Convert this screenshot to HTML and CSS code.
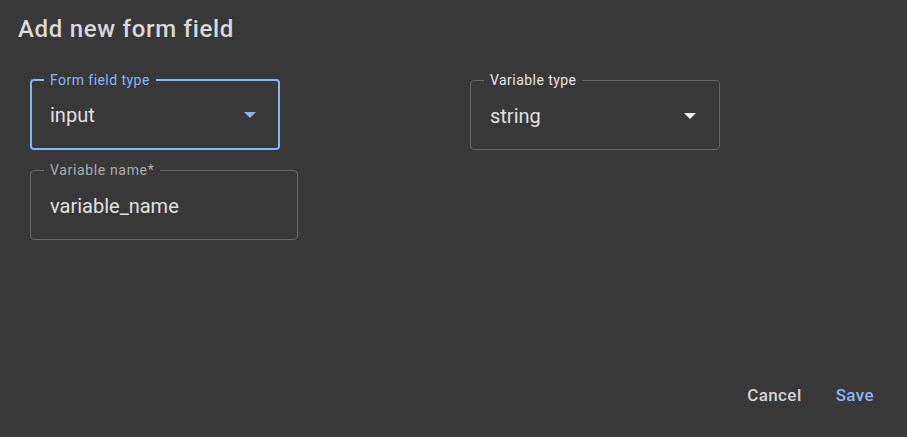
FILE: index.html
```html
<!DOCTYPE html>
<html>
<head>
<meta charset="utf-8">
<link rel="stylesheet" href="styles.css">
</head>
<body>
<div class="dialog">
  <h2 class="title">Add new form field</h2>
  <div class="content">
    <div class="row">
      <fieldset class="field focused">
        <legend>Form field type</legend>
        <div class="control">
          <span class="value">input</span>
          <svg class="arrow" width="12" height="6" viewBox="0 0 12 6"><polygon points="0,0 12,0 6,6"/></svg>
        </div>
      </fieldset>
      <fieldset class="field filled">
        <legend>Variable type</legend>
        <div class="control">
          <span class="value">string</span>
          <svg class="arrow" width="12" height="6" viewBox="0 0 12 6"><polygon points="0,0 12,0 6,6"/></svg>
        </div>
      </fieldset>
    </div>
    <div class="row row2">
      <fieldset class="field text">
        <legend>Variable name*</legend>
        <div class="control">
          <span class="value">variable_name</span>
        </div>
      </fieldset>
    </div>
  </div>
  <div class="actions">
    <button class="btn cancel">Cancel</button>
    <button class="btn save">Save</button>
  </div>
</div>
</body>
</html>
```

FILE: styles.css
```css
html, body {
  margin: 0;
  padding: 0;
  background: #383838;
}
body {
  font-family: Roboto, "Noto Sans", "Liberation Sans", sans-serif;
}
.dialog {
  box-sizing: border-box;
  height: 437px;
  display: flex;
  flex-direction: column;
  padding: 15px 0 24px 0;
}
.title {
  margin: 0;
  padding: 0 18px;
  font-size: 24px;
  line-height: 28px;
  font-weight: 500;
  letter-spacing: 0.7px;
  color: #d9d9d9;
}
.content {
  margin-top: 29px;
  padding: 0 30px;
  display: flex;
  flex-direction: column;
  row-gap: 12px;
}
.row {
  display: grid;
  grid-template-columns: 250px 250px;
  column-gap: 190px;
}
.row2 {
  grid-template-columns: 268px;
}
.field {
  margin: 0;
  padding: 0;
  min-width: 0;
  border: 1px solid #666;
  border-radius: 4px;
}
.field legend {
  margin-left: 13px;
  padding: 0 6px 0 6px;
  font-size: 14px;
  line-height: 16px;
  letter-spacing: 0.45px;
  color: #adadad;
}
.field.filled legend {
  color: #e6e6e6;
}
.field.text legend {
  letter-spacing: 0.65px;
}
.field.focused {
  border: 2px solid #8ab4f8;
}
.field.focused legend {
  margin-left: 12px;
  color: #8ab4f8;
}
.control {
  box-sizing: border-box;
  height: 61px;
  padding: 0 23px 6px 19px;
  display: flex;
  align-items: center;
  justify-content: space-between;
}
.field.focused .control {
  height: 59px;
  padding: 0 22px 6px 18px;
}
.value {
  font-size: 20px;
  line-height: 24px;
  color: #e0e0e0;
}
.arrow {
  display: block;
  fill: #f0f0f0;
}
.focused .arrow {
  fill: #8ab4f8;
}
.actions {
  margin-top: auto;
  display: flex;
  justify-content: flex-end;
  padding: 0 17px;
  gap: 2px;
}
.btn {
  background: none;
  border: none;
  padding: 6px 16px;
  font-family: Roboto, "Noto Sans", "Liberation Sans", sans-serif;
  font-size: 17px;
  line-height: 24px;
  font-weight: 500;
  letter-spacing: 0.4px;
  cursor: pointer;
}
.cancel {
  color: #d4d4d4;
}
.save {
  color: #8ab4f8;
}
```
